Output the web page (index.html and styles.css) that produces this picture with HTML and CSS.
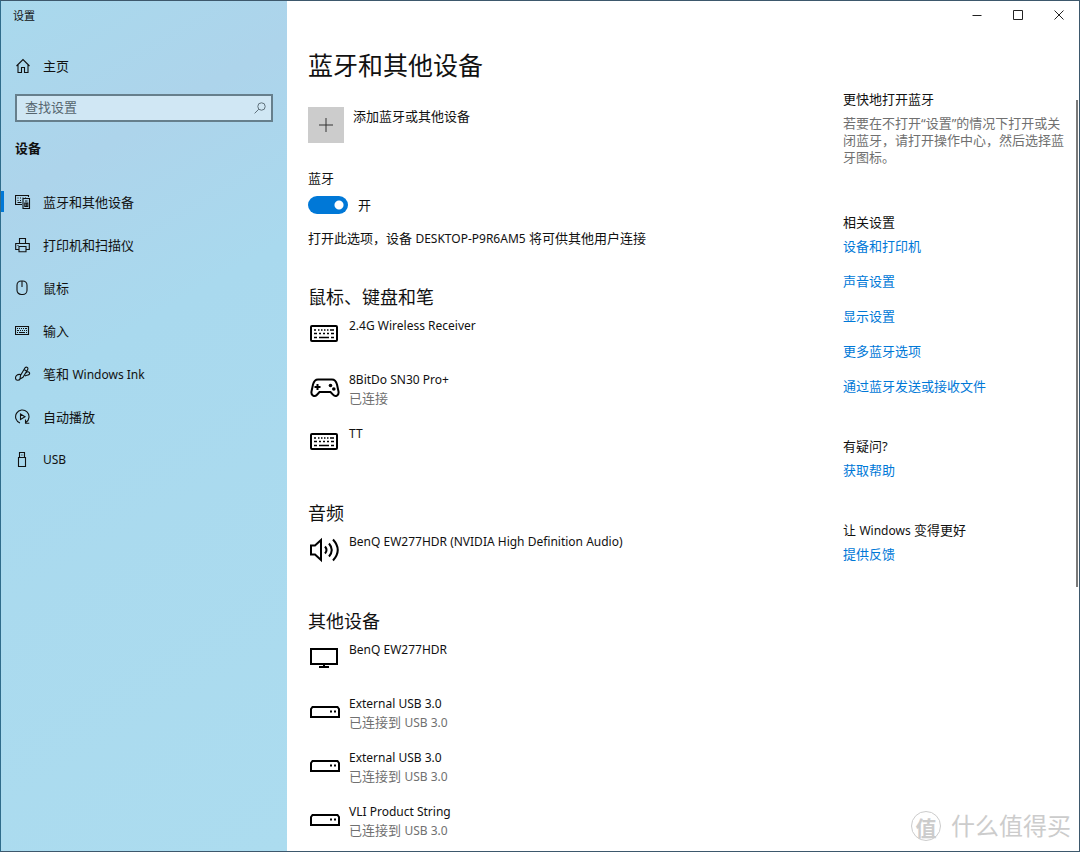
FILE: index.html
```html
<!DOCTYPE html>
<html lang="zh-CN">
<head>
<meta charset="utf-8">
<meta name="viewport" content="width=device-width, initial-scale=1">
<title>设置</title>
<link rel="stylesheet" href="styles.css">
</head>
<body>
<svg class="defs" aria-hidden="true">
  <symbol id="keyboard" viewBox="0 0 28 18">
    <rect x="1" y="1" width="26" height="15" rx="1" fill="none" stroke="currentColor" stroke-width="2"/>
    <path d="M4 5h2m2 0h1.500m1.500 0h1.500m1.500 0h1.500m1.500 0h1.500m1.500 0h4M4 8.500h3m2 0h2m2 0h2m2 0h2m2 0h3M4 12.500h3m2 0h10m2 0h3" fill="none" stroke="currentColor" stroke-width="1.600"/>
  </symbol>
  <symbol id="drive" viewBox="0 0 30 12">
    <path d="M1 11V3L2.500 1h25L29 3v8z" fill="none" stroke="currentColor" stroke-width="2"/>
    <path d="M20 4.500h2v2h-2zm4 0h2v2h-2z" fill="currentColor"/>
  </symbol>
</svg>
<div class="window">
  <aside class="sidebar">
    <div class="app-name">设置</div>
    <a class="nav-link home" href="#">
      <svg class="nav-icon" viewBox="0 0 16 16"><path d="M1.500 8L8 1.500 14.500 8M3 6.800V14.500h3.500V9.500h3v5H13V6.800"/></svg>
      <span>主页</span>
    </a>
    <div class="search">
      <input class="search-input" type="search" placeholder="查找设置" aria-label="查找设置">
      <svg class="search-icon" viewBox="0 0 12 12"><circle cx="7.500" cy="4.500" r="3.700"/><path d="M4.800 7.200L.6 11.400"/></svg>
    </div>
    <h2 class="category">设备</h2>
    <nav class="nav">
      <a class="nav-link active" href="#">
        <svg class="nav-icon" viewBox="0 0 16 16"><path d="M7 10.500H.5v-9h13V3M2.500 4h1m1.500 0h1m1.500 0h1m1.500 0h1M2.500 6.500h1m1.500 0h1M2.500 8.500h4M8 4.500h6.500v10H8zM10 7h2.500M9.800 9h3v3.500h-3zM11.300 9v3.500"/></svg>
        <span>蓝牙和其他设备</span>
      </a>
      <a class="nav-link" href="#">
        <svg class="nav-icon" viewBox="0 0 16 16"><path d="M4.500 6.500v-5h6v5M4 12.500H.7v-6h13.600v6H11M4 9.500h7v5.300H4zM2.500 8.500h1"/></svg>
        <span>打印机和扫描仪</span>
      </a>
      <a class="nav-link" href="#">
        <svg class="nav-icon" viewBox="0 0 16 16"><rect x="2" y="1" width="10" height="13.500" rx="4.300"/><path d="M7 1v6"/></svg>
        <span>鼠标</span>
      </a>
      <a class="nav-link" href="#">
        <svg class="nav-icon" viewBox="0 0 16 16"><path d="M.5 3.500h13v8H.5zM2 5.500h1m1 0h1m1 0h1m1 0h1m1 0h2M2 7.500h2m1 0h1m1 0h1m1 0h1m1 0h1M2 9.500h1m1 0h6m1 0h1"/></svg>
        <span>输入</span>
      </a>
      <a class="nav-link" href="#">
        <svg class="nav-icon" viewBox="0 0 16 16"><path d="M5 13l.5-3.500L10 1.800q1.200-1.200 2.300-.4 1 .8.400 2.200L8 11.300zM5.500 8.500C2 8 .5 10 .5 12c0 3 4 2.500 4.500 1M9 3.500l2.500 1.500M11 7c2-2.500 4-.5 3.500 1-.5 1.500-3 1-4.500 2"/></svg>
        <span>笔和 <span class="latin">Windows Ink</span></span>
      </a>
      <a class="nav-link" href="#">
        <svg class="nav-icon" viewBox="0 0 16 16"><path d="M5 14A6.700 6.700 0 1 1 11 13.300M10.500 10.500v3.800h3.800M5.500 5v5.500L10 7.700z"/></svg>
        <span>自动播放</span>
      </a>
      <a class="nav-link" href="#">
        <svg class="nav-icon" viewBox="0 0 16 16"><path d="M4.500 5.500v-5h5v5M3.500 5.500h7v9h-7zM6 3h.6m1 0h.6"/></svg>
        <span class="latin">USB</span>
      </a>
    </nav>
  </aside>

  <div class="page">
    <header class="titlebar">
      <button class="caption" type="button" aria-label="最小化"><svg viewBox="0 0 10 10"><path d="M.5 5.500h9"/></svg></button>
      <button class="caption" type="button" aria-label="最大化"><svg viewBox="0 0 10 10"><path d="M.5.5h9v9h-9z"/></svg></button>
      <button class="caption" type="button" aria-label="关闭"><svg viewBox="0 0 10 10"><path d="M.5.5l9 9M9.500.5l-9 9"/></svg></button>
    </header>
    <div class="columns">
      <main class="content">
        <h1 class="title">蓝牙和其他设备</h1>
        <button class="add" type="button">
          <span class="add-tile"><svg viewBox="0 0 16 16"><path d="M8 1v14M1 8h14"/></svg></span>
          <span>添加蓝牙或其他设备</span>
        </button>
        <label class="toggle-label" for="bt">蓝牙</label>
        <div class="toggle-row">
          <input class="toggle" id="bt" type="checkbox" role="switch" checked>
          <span>开</span>
        </div>
        <p class="hint">打开此选项，设备 <span class="latin">DESKTOP-P9R6AM5</span> 将可供其他用户连接</p>

        <section class="group">
          <h2 class="group-title">鼠标、键盘和笔</h2>
          <ul class="devices">
            <li class="device"><svg class="icon-keyboard"><use href="#keyboard"/></svg><div class="name">2.4G Wireless Receiver</div></li>
            <li class="device">
              <svg class="icon-pad" viewBox="0 0 30 20"><path d="M8 1.500h14c3 0 4.200 2 5 5l1.500 7c.7 4-3 6-5.500 3.200L20.500 14h-11L7 16.700C4.500 19.500.8 17.500 1.500 13.500L3 6.500c.8-3 2-5 5-5z" fill="none" stroke="currentColor" stroke-width="2"/><path d="M7.500 6v6M4.500 9h6" stroke="currentColor" stroke-width="2"/><circle cx="20.500" cy="7.500" r="1.800" fill="currentColor"/><circle cx="23.800" cy="11" r="1.800" fill="currentColor"/></svg>
              <div><div class="name">8BitDo SN30 Pro+</div><div class="status">已连接</div></div>
            </li>
            <li class="device"><svg class="icon-keyboard"><use href="#keyboard"/></svg><div class="name">TT</div></li>
          </ul>
        </section>

        <section class="group">
          <h2 class="group-title">音频</h2>
          <ul class="devices">
            <li class="device">
              <svg class="icon-speaker" viewBox="0 0 30 26"><path d="M1 8.500h4L11 3v20l-6-5.500H1z" fill="none" stroke="currentColor" stroke-width="2"/><path d="M15 9.500q3 3.500 0 7M19 6.500q5.500 6.500 0 13M23 2.500q9.500 10.500 0 21" fill="none" stroke="currentColor" stroke-width="2"/></svg>
              <div class="name">BenQ EW277HDR (NVIDIA High Definition Audio)</div>
            </li>
          </ul>
        </section>

        <section class="group">
          <h2 class="group-title">其他设备</h2>
          <ul class="devices">
            <li class="device">
              <svg class="icon-monitor" viewBox="0 0 28 20"><path d="M1 1h26v15H1zM14 16v3M9 19h10" fill="none" stroke="currentColor" stroke-width="2"/></svg>
              <div class="name">BenQ EW277HDR</div>
            </li>
            <li class="device"><svg class="icon-drive"><use href="#drive"/></svg><div><div class="name">External USB 3.0</div><div class="status">已连接到 <span class="latin">USB 3.0</span></div></div></li>
            <li class="device"><svg class="icon-drive"><use href="#drive"/></svg><div><div class="name">External USB 3.0</div><div class="status">已连接到 <span class="latin">USB 3.0</span></div></div></li>
            <li class="device"><svg class="icon-drive"><use href="#drive"/></svg><div><div class="name">VLI Product String</div><div class="status">已连接到 <span class="latin">USB 3.0</span></div></div></li>
          </ul>
        </section>
      </main>

      <aside class="related">
        <section class="tips">
          <h3 class="tips-title">更快地打开蓝牙</h3>
          <p class="tips-text">若要在不打开“设置”的情况下打开或关闭蓝牙，请打开操作中心，然后选择蓝牙图标。</p>
        </section>
        <section class="tips">
          <h3 class="tips-title">相关设置</h3>
          <div class="links">
            <a href="#">设备和打印机</a>
            <a href="#">声音设置</a>
            <a href="#">显示设置</a>
            <a href="#">更多蓝牙选项</a>
            <a href="#">通过蓝牙发送或接收文件</a>
          </div>
        </section>
        <section class="tips">
          <h3 class="tips-title">有疑问?</h3>
          <div class="links"><a href="#">获取帮助</a></div>
        </section>
        <section class="tips">
          <h3 class="tips-title">让 <span class="latin">Windows</span> 变得更好</h3>
          <div class="links"><a href="#">提供反馈</a></div>
        </section>
      </aside>
    </div>
    <div class="scroll-thumb"></div>
    <div class="watermark"><span class="watermark-logo">值</span><span>什么值得买</span></div>
  </div>
</div>
</body>
</html>
```

FILE: styles.css
```css
* { box-sizing: border-box; }

body {
  margin: 0;
  font: 13px/18px "Noto Sans", "Noto Sans CJK SC", sans-serif;
  color: #111;
  background: #fff;
}

h1, h2, h3, p, ul { margin: 0; padding: 0; font-weight: 400; }
ul { list-style: none; }
a { color: #0078d7; text-decoration: none; }
button { border: 0; padding: 0; background: none; font: inherit; color: inherit; }
svg { display: block; flex: none; }

.defs { position: absolute; width: 0; height: 0; }
.latin { font-size: 12px; line-height: 14px; }
.name { font-size: 12px; }

.window {
  display: grid;
  grid-template-columns: 286px 1fr;
  min-height: 100vh;
  border: 1px solid #3d586c;
  border-left-color: #2f6c8b;
}

/* Sidebar */
.sidebar {
  padding: 6px 0 0;
  background: linear-gradient(150deg, #a9d9ed 0, #add4eb 20%, #a9d9ee 40%, #acdcef 100%);
}
.app-name { padding-left: 12px; font-size: 11px; }

.nav-link {
  display: flex;
  align-items: center;
  gap: 12px;
  height: 43px;
  padding-left: 14px;
  color: #111;
}
.nav-icon {
  width: 16px;
  height: 16px;
  fill: none;
  stroke: currentColor;
  stroke-width: 1.1;
}
.home { margin-top: 19px; }

.search { position: relative; margin: 7px 14px 0; }
.search-input {
  display: block;
  width: 100%;
  height: 28px;
  padding: 0 32px 2px 8px;
  border: 2px solid #667f8c;
  border-radius: 0;
  background: #d0e7f4;
  font: inherit;
  appearance: none;
}
.search-input::placeholder { color: #56666f; opacity: 1; }
.search-icon {
  position: absolute;
  top: 8px;
  right: 7px;
  width: 12px;
  height: 12px;
  fill: none;
  stroke: #5f717b;
}

.category {
  margin-top: 17px;
  padding-left: 14px;
  font-size: 13px;
  font-weight: 700;
}
.nav { margin-top: 23px; }
.active {
  background: linear-gradient(#0078d7, #0078d7) left center / 3px 21px no-repeat;
}

/* Title bar */
.page { position: relative; }
.titlebar { display: flex; justify-content: flex-end; }
.caption {
  display: grid;
  place-items: center;
  width: 41px;
  height: 28px;
}
.caption svg {
  width: 10px;
  height: 10px;
  fill: none;
  stroke: #222;
}

/* Page columns */
.columns {
  display: grid;
  grid-template-columns: 1fr 225px;
  gap: 24px;
  padding: 18px 11px 7px 21px;
}

.title { font-size: 25px; line-height: 36px; }
.add {
  display: flex;
  gap: 9px;
  margin-top: 24px;
  text-align: left;
}
.add-tile {
  display: grid;
  place-items: center;
  width: 36px;
  height: 36px;
  background: #ccc;
}
.add-tile svg { width: 16px; height: 16px; stroke: #333; }

.toggle-label { display: block; margin-top: 26px; }
.toggle-row {
  display: flex;
  align-items: center;
  gap: 10px;
  margin-top: 9px;
}
.toggle {
  width: 40px;
  height: 18px;
  margin: 0;
  border-radius: 9px;
  appearance: none;
  background: radial-gradient(circle at 31px 9px, #fff 4px, #0078d7 5px);
}
.hint { margin-top: 15px; }

.group { margin-top: 38px; }
.group + .group { margin-top: 40px; }
.group-title { font-size: 18px; line-height: 24px; }
.devices { display: grid; gap: 18px; margin-top: 8px; }
.device {
  display: grid;
  grid-template-columns: 30px 1fr;
  column-gap: 9px;
  min-height: 36px;
  padding-left: 2px;
}
.device svg { align-self: center; margin-bottom: 3px; color: #000; }
.status, .tips-text { color: #707070; }
.icon-keyboard { width: 28px; height: 18px; }
.icon-pad { width: 30px; height: 20px; }
.icon-speaker { width: 30px; height: 26px; }
.icon-monitor { width: 28px; height: 20px; }
.icon-drive { width: 30px; height: 12px; }

/* Related column */
.related { padding-top: 43px; }
.tips { margin-bottom: 42px; }
.tips:first-child { margin-bottom: 47px; }
.tips-title { font-size: 13px; }
.tips-text { margin-top: 7px; line-height: 17px; }
.links {
  display: grid;
  justify-items: start;
  gap: 17px;
  margin-top: 6px;
}

.scroll-thumb {
  position: absolute;
  top: 99px;
  right: 1px;
  width: 2px;
  height: 487px;
  background: #7a7a7a;
}

.watermark {
  position: absolute;
  right: 8px;
  bottom: 9px;
  display: flex;
  align-items: center;
  gap: 10px;
  font-size: 24px;
  line-height: 32px;
  color: #ccc;
}
.watermark-logo {
  display: grid;
  place-items: center;
  width: 30px;
  height: 30px;
  border: 1px solid #ccc;
  border-radius: 50%;
  font-size: 21px;
  font-weight: 700;
}
```
